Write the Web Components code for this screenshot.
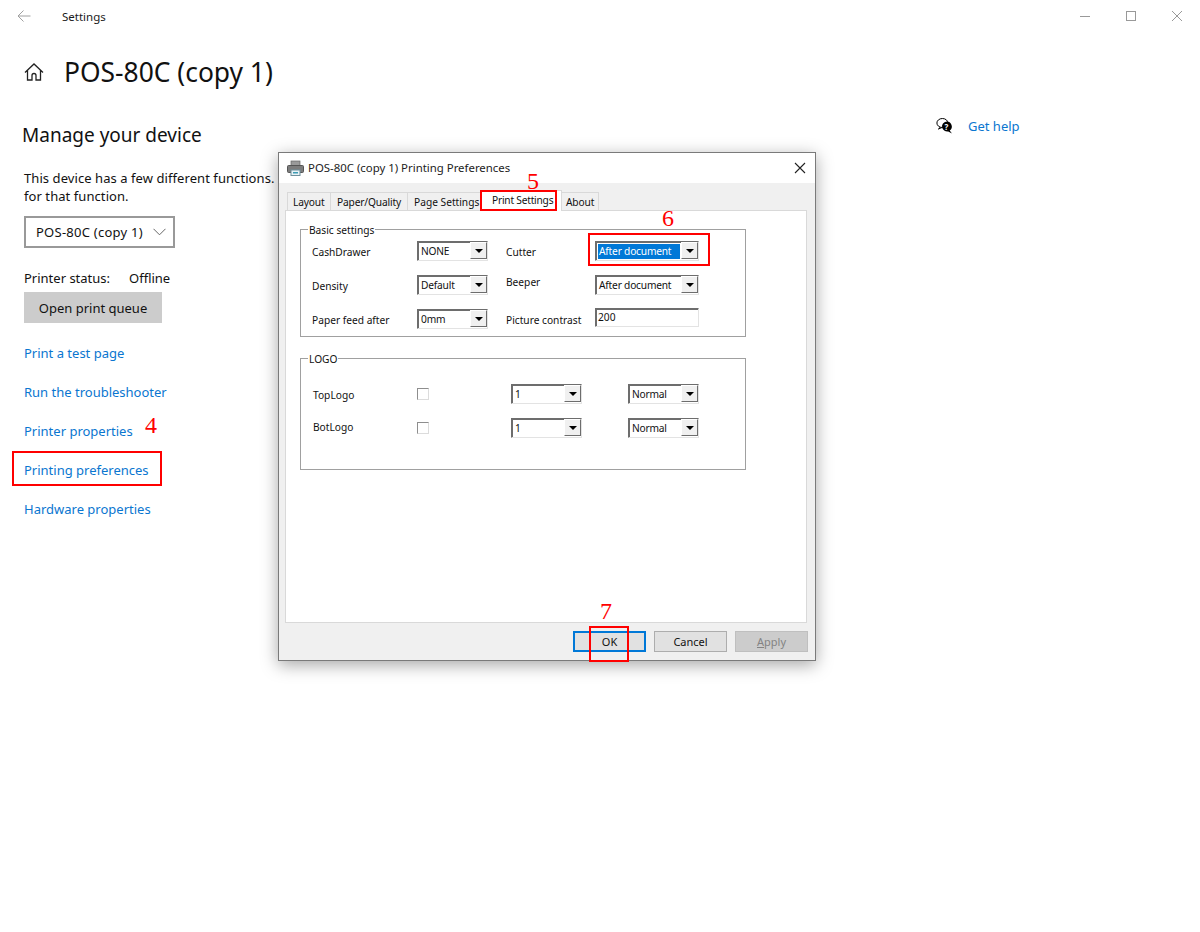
<!DOCTYPE html>
<html>
<head>
<meta charset="utf-8">
<title>Settings</title>
<style>
  html, body { margin: 0; height: 100%; background: #fff; }
  body { font-family: "Noto Sans", "Open Sans", sans-serif; overflow: hidden; }
</style>
</head>
<body>
<settings-page></settings-page>

<script>
// small helper so every element gets its open shadow root the same way
class Base extends HTMLElement {
  constructor() {
    super();
    this.attachShadow({ mode: 'open' });
  }
  attr(name, fallback = '') {
    return this.hasAttribute(name) ? this.getAttribute(name) : fallback;
  }
}

class TitleBar extends Base {
  connectedCallback() {
    this.shadowRoot.innerHTML = `
      <style>
        :host { display: flex; height: 32px; align-items: center; color: #1a1a1a; }
        .back { width: 48px; height: 32px; display: flex; align-items: center; justify-content: center; }
        .title { margin-left: 14px; font-size: 11.5px; flex: 1; }
        .btn { width: 46px; height: 32px; display: flex; align-items: center; justify-content: center; }
      </style>
      <div class="back">
        <svg width="14" height="12" viewBox="0 0 14 12" fill="none" stroke="#a0a0a0" stroke-width="1"><path d="M13.5 6H1M6.5.5 1 6l5.5 5.5"/></svg>
      </div>
      <div class="title">Settings</div>
      <div class="btn"><svg width="10" height="10"><path d="M0 5.5h10" stroke="#999"/></svg></div>
      <div class="btn"><svg width="10" height="10"><rect x=".5" y=".5" width="9" height="9" fill="none" stroke="#999"/></svg></div>
      <div class="btn"><svg width="10" height="10"><path d="M0 0l10 10M10 0 0 10" stroke="#999"/></svg></div>
    `;
  }
}

class SideColumn extends Base {
  connectedCallback() {
    this.shadowRoot.innerHTML = `
      <style>
        :host { display: flex; flex-direction: column; align-items: flex-start; width: 270px; color: #111; font-size: 13px; }
        h2 { margin: 0 0 0 -2px; font-weight: 400; font-size: 19px; line-height: 26px; white-space: nowrap; }
        p { margin: 21px 0 0; line-height: 18px; white-space: nowrap; letter-spacing: .07px; }
        .combo { margin-top: 11px; box-sizing: border-box; width: 151px; height: 32px; border: 2px solid #999; display: flex; align-items: center; padding: 0 7px 0 10px; justify-content: space-between; white-space: nowrap; letter-spacing: .25px; }
        .status { margin-top: 21px; line-height: 18px; white-space: nowrap; display: flex; }
        .status span:first-child { width: 105px; }
        .queue { margin-top: 5px; width: 138px; height: 31px; background: #ccc; display: flex; align-items: center; justify-content: center; }
        .links { margin-top: 21px; display: flex; flex-direction: column; gap: 21px; color: #0a76d0; }
        .links span { line-height: 18px; white-space: nowrap; }
      </style>
      <h2>Manage your device</h2>
      <p>This device has a few different functions.<br>for that function.</p>
      <div class="combo">POS-80C (copy 1)
        <svg width="13" height="8" viewBox="0 0 13 8" fill="none" stroke="#666"><path d="M.5 .8 6.500 6.800 12.500 .8"/></svg>
      </div>
      <div class="status"><span>Printer status:</span><span>Offline</span></div>
      <div class="queue">Open print queue</div>
      <div class="links">
        <span>Print a test page</span>
        <span>Run the troubleshooter</span>
        <span>Printer properties</span>
        <span>Printing preferences</span>
        <span>Hardware properties</span>
      </div>
    `;
  }
}

class HelpLink extends Base {
  connectedCallback() {
    this.shadowRoot.innerHTML = `
      <style>
        :host { display: flex; align-items: center; gap: 15px; color: #0a76d0; font-size: 13px; }
      </style>
      <svg width="17" height="16" viewBox="0 0 17 16">
        <path d="M5 8.500 2.400 11 6 9.500" fill="#fff" stroke="#000"/>
        <ellipse cx="6.400" cy="5" rx="5.500" ry="4.500" fill="#fff" stroke="#000"/>
        <path d="M10.500 3.500a5.300 5 0 0 1 3.200 9l2.300 3-3.800-2a5.300 5 0 1 1-1.700-10z" fill="#000"/>
        <text x="10.500" y="11.500" font-size="8" font-weight="700" font-family="Noto Sans" fill="#fff" text-anchor="middle">?</text>
      </svg>
      <span>Get help</span>
    `;
  }
}

// win32 style dropdown
class WinCombo extends Base {
  connectedCallback() {
    const w = this.attr('w', '71');
    const sel = this.hasAttribute('selected');
    this.shadowRoot.innerHTML = `
      <style>
        :host { display: block; width: ${w}px; }
        .box { box-sizing: border-box; height: 20px; display: flex; background: #fff;
          border: 1px solid; border-color: #6d6d6d #e3e3e3 #e3e3e3 #6d6d6d; box-shadow: inset 1px 1px 0 #6d6d6d; padding: 2px 0 1px 2px; }
        .val { flex: 1; font-size: 10.200px; letter-spacing: -.2px; line-height: 14px; padding-left: 1px; color: #111; white-space: nowrap; overflow: hidden; }
        .sel { background: #0078d7; color: #fff; margin-right: 1px; }
        .arrow { box-sizing: border-box; width: 17px; height: 17px; margin: -2px 0 -1px; background: #f0f0f0;
          border: 1px solid; border-color: #fff #6d6d6d #6d6d6d #fff; display: flex; align-items: center; justify-content: center; }
        i { width: 0; height: 0; border: 4px solid transparent; border-top-color: #000; border-bottom: 0; }
      </style>
      <div class="box">
        <div class="val ${sel ? 'sel' : ''}"><slot></slot></div>
        <div class="arrow"><i></i></div>
      </div>
    `;
  }
}

class WinTabs extends Base {
  connectedCallback() {
    this.shadowRoot.innerHTML = `
      <style>
        :host { display: flex; align-items: flex-end; height: 21px; padding-left: 2px; font-size: 10.200px; color: #111; }
        span { box-sizing: border-box; height: 18px; line-height: 18px; background: #f0f0f0; border: 1px solid #d9d9d9; border-bottom: 0; margin-right: -1px; white-space: nowrap; letter-spacing: -.15px; }
        .on { height: 21px; line-height: 19px; background: #fff; position: relative; z-index: 1; margin-bottom: -1px; letter-spacing: -.22px; }
      </style>
      <span style="width:44px;padding-left:5px">Layout</span>
      <span style="width:78px;padding-left:6px">Paper/Quality</span>
      <span style="width:74px;padding-left:6px;letter-spacing:0">Page Settings</span>
      <span class="on" style="width:82px;padding-left:11px">Print Settings</span>
      <span style="width:38px;padding-left:4px">About</span>
    `;
  }
}

class GroupBox extends Base {
  connectedCallback() {
    this.shadowRoot.innerHTML = `
      <style>
        :host { display: block; box-sizing: border-box; width: 446px; border: 1px solid #a0a0a0; position: relative; height: ${this.attr('h', '108')}px; }
        .legend { position: absolute; left: 7px; top: -6px; background: #fff; padding: 0 1px; font-size: 10.200px; line-height: 13px; color: #111; }
      </style>
      <div class="legend">${this.attr('label')}</div>
      <slot></slot>
    `;
  }
}

class PrefsDialog extends Base {
  connectedCallback() {
    this.shadowRoot.innerHTML = `
      <style>
        :host { position: absolute; left: 278px; top: 152px; width: 538px; height: 509px; box-sizing: border-box; display: flex; flex-direction: column;
          background: #f0f0f0; border: 1px solid #7a7a7a; box-shadow: 0 4px 16px rgba(0,0,0,.35); font-size: 10.200px; color: #111; }
        header { height: 30px; background: #fff; display: flex; align-items: center; padding-left: 8px; font-size: 11.400px; color: #222; gap: 4px; flex: none; }
        header .name { padding-bottom: 2px; }
        header .x { margin-left: auto; margin-right: 9px; display: flex; }
        .body { padding: 6px 8px 0 6px; flex: 1; display: flex; flex-direction: column; }
        .panel { height: 413px; box-sizing: border-box; background: #fff; border: 1px solid #d9d9d9; padding: 18px 0 0 14px; flex: none; }
        .grid { display: grid; grid-template-columns: 105px 89px 89px 104px; align-items: center; padding: 11px 0 0 11px; row-gap: 14px; }
        .grid > * { white-space: nowrap; }
        .grid > span { padding-top: 2px; }
        .grid > span.up { padding: 0 0 6px; }
        .logo { grid-template-columns: 104px 94px 117px 71px; padding: 25px 0 0 12px; row-gap: 14px; }
        .logo > span { padding-top: 2px; }
        .logo > span.up { padding: 0 0 2px; }
        .input { box-sizing: border-box; width: 104px; height: 19px; margin-top: -3px; border: 1px solid; border-color: #6d6d6d #e3e3e3 #e3e3e3 #6d6d6d; box-shadow: inset 1px 1px 0 #6d6d6d; padding: 1px 0 0 2px; line-height: 14px; }
        .check { box-sizing: border-box; width: 12px; height: 12px; border: 1px solid; border-color: #8e8e8e #dcdcdc #dcdcdc #8e8e8e; background: #fff; }
        .g2 { margin-top: 21px; }
        footer { display: flex; justify-content: flex-end; gap: 8px; padding-top: 8px; margin-right: -1px; }
        .b { box-sizing: border-box; width: 73px; height: 21px; display: flex; align-items: center; justify-content: center; background: #e1e1e1; border: 1px solid #adadad; font-size: 11px; }
        .ok { border: 2px solid #0078d7; }
        .off { background: #ccc; border-color: #bfbfbf; color: #838383; }
        u { text-underline-offset: 1px; }
      </style>
      <header>
        <svg width="17" height="17" viewBox="0 0 17 17">
          <rect x="4" y="1" width="9" height="5" fill="#9a9a9a" stroke="#666" stroke-width=".7"/>
          <rect x=".5" y="5.500" width="16" height="7" rx="1" fill="#7c7c7c" stroke="#555"/>
          <rect x="4" y="10" width="9" height="5.500" fill="#e8f2f6" stroke="#6f8f9b"/>
          <rect x="6" y="12" width="5" height="1.500" fill="#3d9bb3"/>
        </svg>
        <span class="name">POS-80C (copy 1) Printing Preferences</span>
        <span class="x"><svg width="12" height="12"><path d="M1 1l10 10M11 1 1 11" stroke="#222" stroke-width="1.100"/></svg></span>
      </header>
      <div class="body">
        <win-tabs></win-tabs>
        <div class="panel">
          <group-box label="Basic settings" h="108">
            <div class="grid">
              <span>CashDrawer</span><win-combo>NONE</win-combo><span>Cutter</span><win-combo w="104" selected>After document</win-combo>
              <span>Density</span><win-combo>Default</win-combo><span class="up">Beeper</span><win-combo w="104">After document</win-combo>
              <span>Paper feed after</span><win-combo>0mm</win-combo><span>Picture contrast</span><div class="input">200</div>
            </div>
          </group-box>
          <group-box class="g2" label="LOGO" h="112">
            <div class="grid logo">
              <span>TopLogo</span><div class="check"></div><win-combo>1</win-combo><win-combo>Normal</win-combo>
              <span class="up">BotLogo</span><div class="check"></div><win-combo>1</win-combo><win-combo>Normal</win-combo>
            </div>
          </group-box>
        </div>
        <footer>
          <div class="b ok">OK</div><div class="b">Cancel</div><div class="b off"><span><u>A</u>pply</span></div>
        </footer>
      </div>
    `;
  }
}

// red boxes and step numbers drawn over the screenshot
class RedMark extends Base {
  connectedCallback() {
    const box = this.hasAttribute('num') ? '' : 'box';
    this.shadowRoot.innerHTML = `
      <style>
        :host { position: absolute; z-index: 5; left: ${this.attr('x')}px; top: ${this.attr('y')}px; }
        .box { box-sizing: border-box; width: ${this.attr('w')}px; height: ${this.attr('h')}px; border: 2px solid #f00; }
        .num { color: #f00; font: 24px/24px "Liberation Serif", serif; }
      </style>
      ${box ? '<div class="box"></div>' : `<div class="num">${this.attr('num')}</div>`}
    `;
  }
}

class SettingsPage extends Base {
  connectedCallback() {
    this.shadowRoot.innerHTML = `
      <style>
        :host { display: block; position: relative; width: 1200px; height: 932px; overflow: hidden; background: #fff; }
        .head { display: flex; align-items: center; padding: 20px 0 0 24px; gap: 20px; color: #111; }
        .head span { font-size: 26.400px; line-height: 40px; }
        .main { display: flex; padding: 30px 0 0 24px; }
        help-link { margin: -5px 0 0 642px; align-self: flex-start; height: 18px; }
      </style>
      <title-bar></title-bar>
      <div class="head">
        <svg width="20" height="18" viewBox="0 0 20 18" fill="none" stroke="#222" stroke-width="1.300"><path d="M1 9.500 10 1l9 8.500M3.500 7.500V17h4.500v-4.500a2 2 0 0 1 4 0V17h4.500V7.500"/></svg>
        <span>POS-80C (copy 1)</span>
      </div>
      <div class="main">
        <side-column></side-column>
        <help-link></help-link>
      </div>
      <prefs-dialog></prefs-dialog>
      <red-mark x="12" y="451" w="150" h="35"></red-mark>
      <red-mark x="480" y="190" w="77" h="21"></red-mark>
      <red-mark x="588" y="233" w="122" h="33"></red-mark>
      <red-mark x="589" y="626" w="40" h="36"></red-mark>
      <red-mark x="145" y="413" num="4"></red-mark>
      <red-mark x="527" y="169" num="5"></red-mark>
      <red-mark x="662" y="206" num="6"></red-mark>
      <red-mark x="600" y="599" num="7"></red-mark>
    `;
  }
}

customElements.define('title-bar', TitleBar);
customElements.define('side-column', SideColumn);
customElements.define('help-link', HelpLink);
customElements.define('win-combo', WinCombo);
customElements.define('win-tabs', WinTabs);
customElements.define('group-box', GroupBox);
customElements.define('prefs-dialog', PrefsDialog);
customElements.define('red-mark', RedMark);
customElements.define('settings-page', SettingsPage);
</script>
</body>
</html>
